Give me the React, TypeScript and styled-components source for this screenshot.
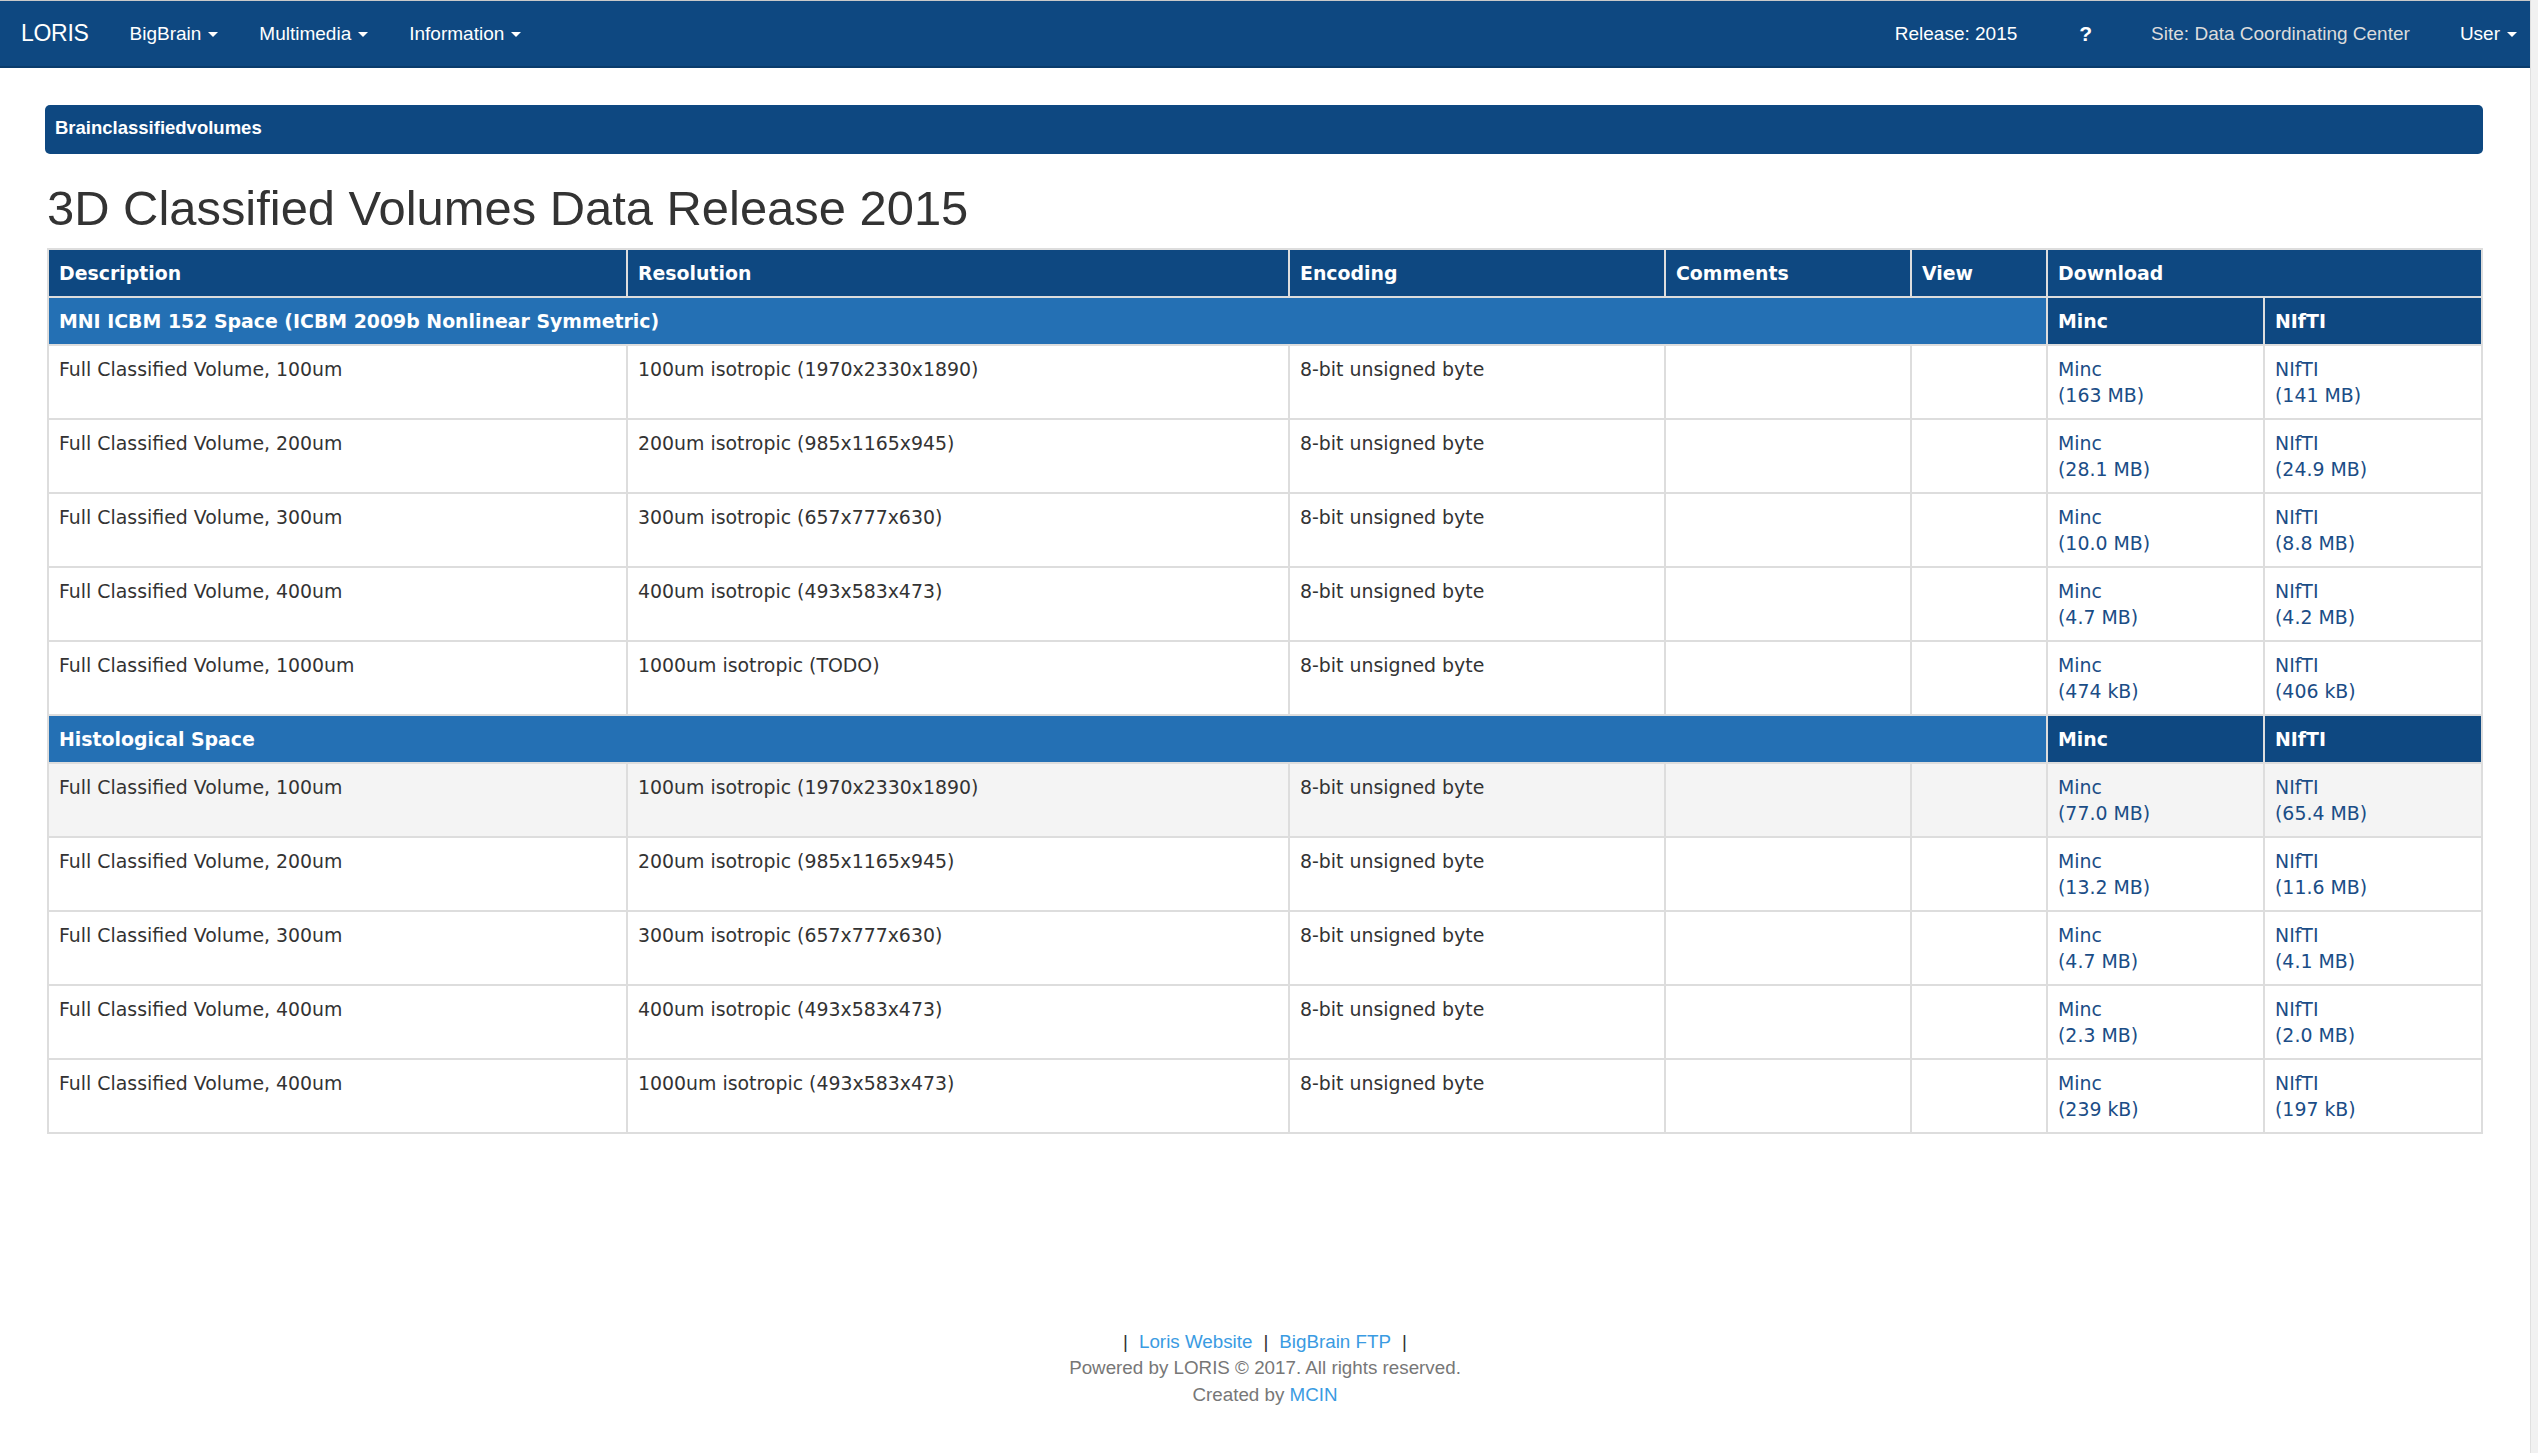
import React from "react";
import styled, { createGlobalStyle } from "styled-components";

const NAVY = "#0e4881";
const BLUE = "#2470b4";
const LINK = "#1b4d86";
const GRID = "#dddddd";

const GlobalStyle = createGlobalStyle`
  html, body { margin: 0; padding: 0; background: #ffffff; }
  body {
    font-family: "Liberation Sans", Arial, Helvetica, sans-serif;
    color: #333333;
  }
  * { box-sizing: border-box; }
`;

const Shell = styled.div`
  display: flex;
  min-height: 1453px;
`;

const Page = styled.div`
  flex: 1;
  min-width: 0;
  display: flex;
  flex-direction: column;
`;

const Gutter = styled.div`
  flex: none;
  width: 8px;
  background: #f1f1f1;
  border-left: 1px solid #e0e0e0;
`;

const NavBar = styled.nav`
  height: 68px;
  display: flex;
  align-items: center;
  background: ${NAVY};
  border-top: 1px solid #c9c9c9;
  border-bottom: 2px solid #0a3c6c;
  padding-left: 21px;
  font-size: 19px;
  color: #ffffff;
`;

const Brand = styled.span`
  font-size: 23px;
  margin-right: 21px;
  letter-spacing: -0.3px;
`;

const NavGroup = styled.div<{ $right?: boolean }>`
  display: flex;
  align-items: center;
  margin-left: ${(p) => (p.$right ? "auto" : "0")};
  padding-right: ${(p) => (p.$right ? "13px" : "0")};
`;

const NavItem = styled.span<{ $pl?: number; $pr?: number; $muted?: boolean }>`
  display: inline-flex;
  align-items: center;
  padding-left: ${(p) => p.$pl ?? 20}px;
  padding-right: ${(p) => p.$pr ?? 21}px;
  color: ${(p) => (p.$muted ? "#dcdcdc" : "#ffffff")};
  white-space: nowrap;
`;

const Help = styled.span`
  font-size: 21px;
  font-weight: bold;
`;

const Caret = styled.span`
  display: inline-block;
  width: 0;
  height: 0;
  margin-left: 7px;
  margin-top: 2px;
  border-top: 5px solid currentColor;
  border-left: 5px solid transparent;
  border-right: 5px solid transparent;
`;

const Content = styled.main`
  padding: 37px 47px 0 45px;
`;

const Banner = styled.div`
  height: 49px;
  display: flex;
  align-items: center;
  padding: 0 10px 4px;
  border-radius: 5px;
  background: ${NAVY};
  color: #ffffff;
  font-weight: bold;
  font-size: 18.5px;
`;

const Title = styled.h1`
  margin: 28px 0 13px 2px;
  font-size: 48.9px;
  line-height: 52.8px;
  font-weight: 400;
  color: #333333;
`;

const Table = styled.table`
  width: 2434px;
  margin-left: 2px;
  border-collapse: collapse;
  table-layout: fixed;
  font-family: "DejaVu Sans", Verdana, sans-serif;
  font-size: 18.9px;
  line-height: 26px;
  border: 2px solid ${GRID};
`;

const HeadCell = styled.th<{ $tone?: "navy" | "blue" }>`
  padding: 10px;
  border: 2px solid ${GRID};
  text-align: left;
  vertical-align: top;
  font-weight: bold;
  color: #ffffff;
  background: ${(p) => (p.$tone === "blue" ? BLUE : NAVY)};
  white-space: nowrap;
`;

const Row = styled.tr<{ $shaded?: boolean }>`
  background: ${(p) => (p.$shaded ? "#f4f4f4" : "#ffffff")};
`;

const Cell = styled.td`
  padding: 10px;
  border: 2px solid ${GRID};
  vertical-align: top;
  color: #333333;
  white-space: nowrap;
`;

const FileLink = styled.a`
  color: ${LINK};
  text-decoration: none;
`;

const Footer = styled.footer`
  padding: 195px 0 40px;
  text-align: center;
  font-size: 18.8px;
  line-height: 26.5px;
  color: #777777;
`;

const Bar = styled.span`
  color: #333333;
`;

const FooterLink = styled.a<{ $inline?: boolean }>`
  color: #3a9be2;
  text-decoration: none;
  margin: ${(p) => (p.$inline ? "0" : "0 11px")};
`;

type Item = {
  desc: string;
  res: string;
  minc: string;
  nifti: string;
};

const mni: Item[] = [
  { desc: "Full Classified Volume, 100um", res: "100um isotropic (1970x2330x1890)", minc: "(163 MB)", nifti: "(141 MB)" },
  { desc: "Full Classified Volume, 200um", res: "200um isotropic (985x1165x945)", minc: "(28.1 MB)", nifti: "(24.9 MB)" },
  { desc: "Full Classified Volume, 300um", res: "300um isotropic (657x777x630)", minc: "(10.0 MB)", nifti: "(8.8 MB)" },
  { desc: "Full Classified Volume, 400um", res: "400um isotropic (493x583x473)", minc: "(4.7 MB)", nifti: "(4.2 MB)" },
  { desc: "Full Classified Volume, 1000um", res: "1000um isotropic (TODO)", minc: "(474 kB)", nifti: "(406 kB)" },
];

const histo: Item[] = [
  { desc: "Full Classified Volume, 100um", res: "100um isotropic (1970x2330x1890)", minc: "(77.0 MB)", nifti: "(65.4 MB)" },
  { desc: "Full Classified Volume, 200um", res: "200um isotropic (985x1165x945)", minc: "(13.2 MB)", nifti: "(11.6 MB)" },
  { desc: "Full Classified Volume, 300um", res: "300um isotropic (657x777x630)", minc: "(4.7 MB)", nifti: "(4.1 MB)" },
  { desc: "Full Classified Volume, 400um", res: "400um isotropic (493x583x473)", minc: "(2.3 MB)", nifti: "(2.0 MB)" },
  { desc: "Full Classified Volume, 400um", res: "1000um isotropic (493x583x473)", minc: "(239 kB)", nifti: "(197 kB)" },
];

const colWidths = [579, 662, 376, 246, 136, 217, 218];

function Section({ title, items, shadeFirst }: { title: string; items: Item[]; shadeFirst?: boolean }) {
  return (
    <tbody>
      <tr>
        <HeadCell colSpan={5} $tone="blue">{title}</HeadCell>
        <HeadCell>Minc</HeadCell>
        <HeadCell>NIfTI</HeadCell>
      </tr>
      {items.map((it, i) => (
        <Row key={i} $shaded={shadeFirst && i === 0}>
          <Cell>{it.desc}</Cell>
          <Cell>{it.res}</Cell>
          <Cell>8-bit unsigned byte</Cell>
          <Cell />
          <Cell />
          <Cell>
            <FileLink href="#">Minc<br />{it.minc}</FileLink>
          </Cell>
          <Cell>
            <FileLink href="#">NIfTI<br />{it.nifti}</FileLink>
          </Cell>
        </Row>
      ))}
    </tbody>
  );
}

export default function App() {
  return (
    <>
      <GlobalStyle />
      <Shell>
        <Page>
          <NavBar>
            <Brand>LORIS</Brand>
            <NavGroup>
              <NavItem>BigBrain<Caret /></NavItem>
              <NavItem>Multimedia<Caret /></NavItem>
              <NavItem>Information<Caret /></NavItem>
            </NavGroup>
            <NavGroup $right>
              <NavItem $pl={25} $pr={27}>Release: 2015</NavItem>
              <NavItem $pl={35} $pr={34}><Help>?</Help></NavItem>
              <NavItem $pl={25} $pr={25} $muted>Site: Data Coordinating Center</NavItem>
              <NavItem $pl={25} $pr={0}>User<Caret /></NavItem>
            </NavGroup>
          </NavBar>
          <Content>
            <Banner>Brainclassifiedvolumes</Banner>
            <Title>3D Classified Volumes Data Release 2015</Title>
            <Table>
              <colgroup>
                {colWidths.map((w, i) => (
                  <col key={i} style={{ width: w }} />
                ))}
              </colgroup>
              <thead>
                <tr>
                  <HeadCell>Description</HeadCell>
                  <HeadCell>Resolution</HeadCell>
                  <HeadCell>Encoding</HeadCell>
                  <HeadCell>Comments</HeadCell>
                  <HeadCell>View</HeadCell>
                  <HeadCell colSpan={2}>Download</HeadCell>
                </tr>
              </thead>
              <Section title="MNI ICBM 152 Space (ICBM 2009b Nonlinear Symmetric)" items={mni} />
              <Section title="Histological Space" items={histo} shadeFirst />
            </Table>
          </Content>
          <Footer>
            <div>
              <Bar>|</Bar>
              <FooterLink href="#">Loris Website</FooterLink>
              <Bar>|</Bar>
              <FooterLink href="#">BigBrain FTP</FooterLink>
              <Bar>|</Bar>
            </div>
            <div>Powered by LORIS © 2017. All rights reserved.</div>
            <div>
              Created by <FooterLink href="#" $inline>MCIN</FooterLink>
            </div>
          </Footer>
        </Page>
        <Gutter />
      </Shell>
    </>
  );
}
